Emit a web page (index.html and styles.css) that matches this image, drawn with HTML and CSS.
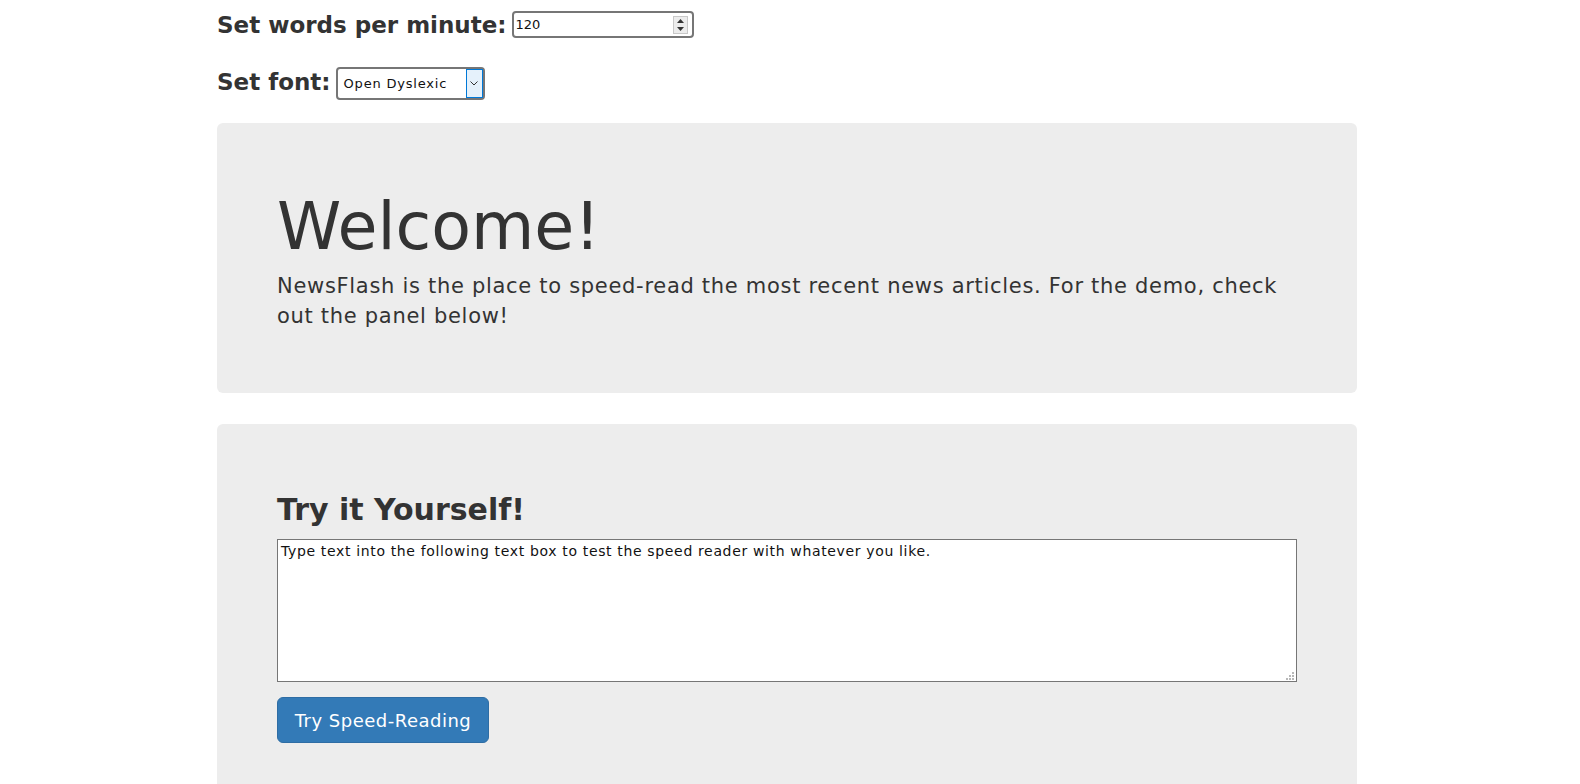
FILE: index.html
```html
<!DOCTYPE html>
<html lang="en">
<head>
<meta charset="utf-8">
<title>NewsFlash</title>
<link rel="stylesheet" href="styles.css">
</head>
<body>
<div class="container">
  <div class="settings">
    <div class="setting">
      <label class="setting-label" for="wpm">Set words per minute:</label>
      <div class="num-input">
        <span class="num-value">120</span>
        <span class="spinner">
          <span class="spin-btn"><svg width="7" height="4" viewBox="0 0 7 4"><path d="M0 4 L3.5 0 L7 4 Z" fill="#333"/></svg></span>
          <span class="spin-btn"><svg width="7" height="4" viewBox="0 0 7 4"><path d="M0 0 L3.5 4 L7 0 Z" fill="#333"/></svg></span>
        </span>
      </div>
    </div>
    <div class="setting setting-font">
      <label class="setting-label">Set font:</label>
      <div class="select-box">
        <span class="select-value">Open Dyslexic</span>
        <span class="select-arrow"><svg width="8" height="5" viewBox="0 0 8 5"><path d="M0.5 0.5 L4 4 L7.5 0.5" fill="none" stroke="#333" stroke-width="1"/></svg></span>
      </div>
    </div>
  </div>

  <section class="jumbotron jumbo-welcome">
    <h1 class="jumbo-title">Welcome!</h1>
    <p class="jumbo-text">NewsFlash is the place to speed-read the most recent news articles. For the demo, check out the panel below!</p>
  </section>

  <section class="jumbotron jumbo-try">
    <h2 class="try-title">Try it Yourself!</h2>
    <div class="textarea">Type text into the following text box to test the speed reader with whatever you like.
      <span class="grip"><svg width="8" height="8" viewBox="0 0 8 8" fill="#b8b8b8"><rect x="6" y="0" width="2" height="2"/><rect x="3" y="3" width="2" height="2"/><rect x="6" y="3" width="2" height="2"/><rect x="0" y="6" width="2" height="2"/><rect x="3" y="6" width="2" height="2"/><rect x="6" y="6" width="2" height="2"/></svg></span>
    </div>
    <button class="btn-primary">Try Speed-Reading</button>
  </section>
</div>
</body>
</html>
```

FILE: styles.css
```css
html, body {
  margin: 0;
  padding: 0;
  background: #fff;
}
body {
  padding-right: 6px;
  font-family: "DejaVu Sans", "Liberation Sans", sans-serif;
  color: #333;
  overflow: hidden;
}
.container {
  width: 1140px;
  margin: 0 auto;
}
.settings {
  display: flex;
  flex-direction: column;
  gap: 28px;
  padding-top: 11px;
}
.setting {
  display: flex;
  align-items: flex-end;
  gap: 5px;
  height: 28px;
}
.setting-font {
  height: 33px;
  align-items: center;
}
.setting-font .setting-label {
  margin-top: -3px;
}
.setting-label {
  font-weight: bold;
  font-size: 23px;
  line-height: 28px;
  color: #333;
}
.num-input {
  width: 176px;
  height: 23px;
  border: 2px solid #767676;
  border-radius: 4px;
  display: flex;
  align-items: center;
  justify-content: space-between;
  padding-left: 2px;
  margin-bottom: 1px;
  background: #fff;
}
.num-value {
  font-size: 13px;
  color: #111;
}
.spinner {
  display: flex;
  flex-direction: column;
  margin-right: 4px;
  width: 13px;
  border: 1px solid #c8c8c8;
  background: #ececec;
}
.spin-btn {
  height: 8px;
  display: flex;
  align-items: center;
  justify-content: center;
}
.select-box {
  border: 2px solid #767676;
  border-radius: 4px;
  display: flex;
  align-items: stretch;
  justify-content: space-between;
  background: #fff;
  width: 145px;
  height: 29px;
}
.select-value {
  font-size: 13px;
  letter-spacing: 0.8px;
  color: #111;
  padding-left: 6px;
  display: flex;
  align-items: center;
}
.select-arrow {
  width: 15px;
  border: 1px solid #0078d7;
  background: #e5f1fb;
  display: flex;
  align-items: center;
  justify-content: center;
}
.jumbotron {
  background: #ededed;
  border-radius: 6px;
  padding: 0 60px;
}
.jumbo-welcome {
  margin-top: 23px;
  padding-top: 69px;
  padding-bottom: 62px;
}
.jumbo-title {
  margin: 0 0 10px 0;
  font-size: 65px;
  line-height: 69px;
  font-weight: normal;
  color: #333;
}
.jumbo-text {
  margin: 0;
  font-size: 21px;
  line-height: 30px;
  font-weight: normal;
  letter-spacing: 0.7px;
}
.jumbo-try {
  margin-top: 31px;
  padding-top: 69px;
  padding-bottom: 100px;
}
.try-title {
  margin: 0 0 13px 0;
  font-size: 30px;
  line-height: 33px;
  font-weight: bold;
  color: #333;
}
.textarea {
  position: relative;
  height: 137px;
  border: 1px solid #767676;
  background: #fff;
  font-size: 14px;
  letter-spacing: 0.65px;
  line-height: 18px;
  padding: 2px 3px;
  color: #111;
  white-space: pre-line;
}
.grip {
  position: absolute;
  right: 2px;
  bottom: 1px;
  line-height: 0;
}
.btn-primary {
  margin-top: 15px;
  display: block;
  width: 212px;
  height: 46px;
  border: 1px solid #2e6da4;
  border-radius: 6px;
  background: #337ab7;
  color: #fff;
  font-family: "DejaVu Sans", "Liberation Sans", sans-serif;
  font-size: 18px;
  letter-spacing: 0.5px;
  padding: 0;
}
```
